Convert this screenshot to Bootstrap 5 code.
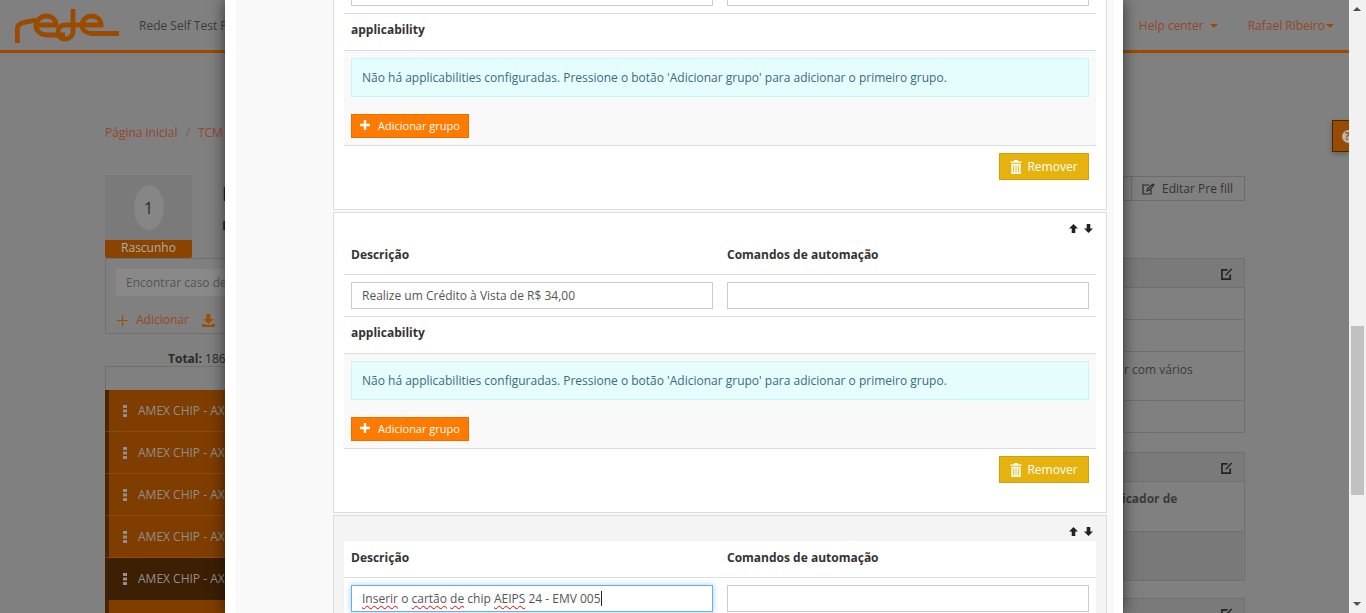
<!DOCTYPE html>
<html lang="en">
<head>
<meta charset="UTF-8">
<title>Rede Self Test Portal</title>
<link href="https://cdn.jsdelivr.net/npm/bootstrap@5.3.0/dist/css/bootstrap.min.css" rel="stylesheet">
<style>
html, body { height: 613px; overflow: hidden; }
body { font-family: "Open Sans", "Liberation Sans", sans-serif; font-size: 12px; color: #333; background: #808080; }
.shell { display: flex; height: 613px; position: relative; overflow: hidden; }

/* page behind the modal (already dimmed colours) */
.page { width: 1349px; flex: none; height: 613px; overflow: hidden; position: relative; color: #2a2a2a; }
.top-bar { height: 53px; border-bottom: 3px solid #9a4b00; display: flex; align-items: center; padding: 1px 15px 0; }
.top-name { margin-left: 18px; color: #3c3c3c; }
.top-link { color: #94472a; }
.help-link { margin-right: 30px; gap: 6px; }
.user-link { gap: 1px; margin-right: 0; }
.caret-dn { display: inline-block; width: 0; height: 0; border-left: 4px solid transparent; border-right: 4px solid transparent; border-top: 4px solid #9a4b00; vertical-align: middle; }
.crumbs { color: #94472a; margin: 71px 0 0 105px; line-height: 17px; height: 51px; }
.crumbs .sep { color: #666; margin: 0 8px; }
.page-cols { display: flex; justify-content: space-between; padding: 0 104px 0 105px; }
.left-col { width: 500px; }
.right-col { width: 122px; }
.status-line { display: flex; gap: 30px; }
.case-title { font-size: 20px; line-height: 24px; color: #1c1c1c; padding-top: 7px; font-weight: 600; }
.case-sub { font-weight: 700; color: #1f2a30; line-height: 14px; margin-top: 12px; font-size: 13px; }
.status-box { width: 87px; height: 83px; background: #7a7a7a; display: flex; flex-direction: column; align-items: center; }
.status-oval { width: 30px; height: 45px; border-radius: 50%; background: #868686; margin-top: 10px; display: flex; align-items: center; justify-content: center; font-size: 16px; }
.status-lbl { width: 100%; margin-top: auto; height: 18px; background: #8a4400; color: #adadad; text-align: center; line-height: 16px; border-radius: 0 0 2px 2px; }
.search-panel { border: 1px solid #707070; height: 76px; padding: 10px; }
.search-box { background: #898989; height: 27px; line-height: 27px; padding-left: 10px; color: #555; }
.search-acts { display: flex; align-items: center; gap: 13px; margin-top: 15px; color: #96481f; padding-left: 1px; }
.total-line { margin: 16px 0 0 63px; line-height: 17px; height: 16px; }
.case-head { height: 24px; border: 1px solid #707070; border-bottom: 0; }
.case-row { height: 42px; background: #7f3d00; border-left: 4px solid #4a2500; border-bottom: 1px solid #8c4a10; display: flex; align-items: center; padding-left: 14px; color: #8f8f8f; gap: 11px; }
.case-row.on { background: #3d1f03; border-left-color: #3d1f03; border-bottom-color: #3d1f03; }
.edit-fill { height: 25px; border: 1px solid #6c6c6c; margin-top: 1px; width: 114px; margin-left: 8px; display: flex; align-items: center; gap: 7px; padding-left: 10px; color: #333; position: relative; }
.edit-fill::before { content: ""; position: absolute; left: -9px; top: -1px; width: 9px; height: 25px; border: 1px solid #6c6c6c; border-right: 0; }
.fill-gap { height: 57px; }
.side-panel { border: 1px solid #6f6f6f; margin-bottom: 19px; }
.side-panel + .side-panel { margin-bottom: 17px; }
.side-head { height: 29px; border-bottom: 1px solid #6f6f6f; background: #7a7a7a; display: flex; align-items: center; justify-content: flex-end; padding: 1px 11px 0 0; }
.side-row { border-bottom: 1px solid #6f6f6f; margin-right: 1px; padding: 8px 0 0; color: #3a3a3a; }
.side-row:last-child { border-bottom: 0; }
.side-row.h32 { height: 32px; }
.side-row.h31 { height: 31px; }
.side-row.tall { height: 49px; padding-top: 9px; }
.side-row.strong { height: 50px; font-weight: 700; margin-left: -2px; }
.side-row.shade { height: 48px; background: #797979; }
.help-tab { position: absolute; right: 0; top: 120px; width: 17px; height: 32px; background: #974b00; border: 1px solid #4a2500; border-right: 0; overflow: hidden; box-shadow: 0 2px 5px rgba(0,0,0,.25); }
.help-dot { position: absolute; left: 9px; top: 9px; width: 13px; height: 13px; border-radius: 50%; background: #b5b5b5; color: #974b00; font-weight: 700; font-size: 10px; line-height: 13px; padding-left: 3px; }

/* modal */
.step-modal { position: absolute; left: 225px; top: 0; width: 898px; height: 613px; background: #fff; box-shadow: 0 0 15px rgba(0,0,0,.6); z-index: 5; overflow: hidden; padding: 0 9px 0 11px; }
.step-scroll { background: #f9f9f9; height: 613px; padding: 0 7px 0 97px; overflow: hidden; }
.step-list { margin-top: -91px; }
.step-card { height: 301px; background: #fff; border: 1px solid #ddd; margin-bottom: 2px; padding: 0 10px; position: relative; }
.step-card.editing { background: #f4f4f4; }
.move-btns { height: 25px; display: flex; justify-content: flex-end; align-items: center; gap: 6px; padding: 6px 3px 0 0; }
.step-head { display: grid; grid-template-columns: 1fr 1fr; gap: 14px; height: 37px; padding: 0 7px 3px; background: #fff; border-bottom: 1px solid #ddd; align-items: center; font-weight: 700; color: #333; }
.step-inputs { display: grid; grid-template-columns: 1fr 1fr; gap: 14px; height: 42px; padding: 7px 7px 0; background: #fff; border-bottom: 1px solid #ddd; }
.step-field { height: 27px; border: 1px solid #ccc; border-radius: 0; padding: 0 10px; font-size: 12px; color: #555; line-height: 25px; background: #fff; white-space: nowrap; }
.step-field.focused { border-color: #66afe9; box-shadow: 0 0 6px rgba(102,175,233,.6); }
.spell { text-decoration: underline wavy #e00; text-decoration-thickness: 1px; text-underline-offset: 2px; }
.text-cursor { display: inline-block; width: 1px; height: 15px; background: #222; vertical-align: -3px; }
.appl-title { height: 37px; padding: 0 7px; line-height: 32px; font-weight: 700; background: #fff; border-bottom: 1px solid #ddd; color: #333; }
.appl-body { background: #f9f9f9; height: 95px; padding: 7px 7px 0; border-bottom: 1px solid #ddd; }
.appl-note { height: 39px; background: #e5fdfd; border: 1px solid #c5f7f7; color: #3d6a80; padding: 0 10px; line-height: 37px; }
.add-group { background: #ff7b00; border: 1px solid #e87000; border-radius: 0; color: #fff; height: 24px; width: 118px; margin-top: 17px; padding: 0 0 2px 8px; font-size: 11px; display: flex; align-items: center; gap: 8px; line-height: 1; }
.step-foot { display: flex; justify-content: flex-end; padding: 7px 7px 0; }
.remove-step { background: #e6b30e; border: 1px solid #cfa00b; border-radius: 0; color: #fff; width: 90px; height: 27px; padding: 0; font-size: 12px; display: flex; align-items: center; justify-content: center; gap: 5px; line-height: 1; }

/* window scrollbar */
.win-scroll { width: 17px; flex: none; background: #f1f1f1; position: relative; }
.win-thumb { position: absolute; left: 2px; top: 326px; width: 13px; height: 169px; background: #c1c1c1; }
.win-up, .win-down { position: absolute; left: 4px; width: 0; height: 0; border-left: 4px solid transparent; border-right: 4px solid transparent; }
.win-up { top: 7px; border-bottom: 4px solid #505050; }
.win-down { bottom: 7px; border-top: 4px solid #505050; }
</style>
</head>
<body>
<div class="shell">
  <div class="page">
    <div class="top-bar">
      <svg width="106" height="36" viewBox="0 0 106 36" fill="none" stroke="#9a4b00" stroke-width="4.8">
        <path d="M2.400 35V21c0-4 2.600-5.500 6-6.300L21 12"/>
        <path d="M22 17h19c0-6-4.500-9-9.500-9S21 12 21 17.500 25.500 27 31.500 27H50"/>
        <path d="M58 1v22c0 5-3.500 8-8 8s-7-3-7-7 3-7 7-7h36c0-6-4.500-9-9.500-9S67 12 67 17.500 70.500 24.500 76 25.500h28" />
      </svg>
      <span class="top-name">Rede Self Test Portal</span>
      <span class="top-link ms-auto d-flex align-items-center help-link">Help center <span class="caret-dn"></span></span>
      <span class="top-link d-flex align-items-center user-link">Rafael Ribeiro<span class="caret-dn"></span></span>
    </div>
    <div class="crumbs">Página inicial<span class="sep">/</span>TCM</div>
    <div class="page-cols">
      <div class="left-col">
        <div class="status-line">
          <div class="status-box"><div class="status-oval">1</div><div class="status-lbl">Rascunho</div></div>
          <div><div class="case-title">I</div><div class="case-sub">F</div></div>
        </div>
        <div class="search-panel">
          <div class="search-box">Encontrar caso de teste</div>
          <div class="search-acts">
            <span class="d-flex align-items-center gap-2">
              <svg width="11" height="11" viewBox="0 0 11 11"><path d="M5.500 0v11M0 5.500h11" stroke="#a04f00" stroke-width="1.200"/></svg>
              Adicionar</span>
            <svg width="13" height="13" viewBox="0 0 13 13" fill="#a04f00"><path d="M4.500 0h4v5h3L6.500 10 1.500 5h3zM0 10h3l1 1h5l1-1h3v3H0z"/></svg>
          </div>
        </div>
        <div class="total-line"><b>Total:</b> 186</div>
        <div class="case-head"></div>
        <div class="case-row"><svg width="4" height="12" fill="#909090"><path d="M0 0h4v3H0zM0 4.500h4v3H0zM0 9h4v3H0z"/></svg>AMEX CHIP - AXP</div>
        <div class="case-row"><svg width="4" height="12" fill="#909090"><path d="M0 0h4v3H0zM0 4.500h4v3H0zM0 9h4v3H0z"/></svg>AMEX CHIP - AXP</div>
        <div class="case-row"><svg width="4" height="12" fill="#909090"><path d="M0 0h4v3H0zM0 4.500h4v3H0zM0 9h4v3H0z"/></svg>AMEX CHIP - AXP</div>
        <div class="case-row"><svg width="4" height="12" fill="#909090"><path d="M0 0h4v3H0zM0 4.500h4v3H0zM0 9h4v3H0z"/></svg>AMEX CHIP - AXP</div>
        <div class="case-row on"><svg width="4" height="12" fill="#909090"><path d="M0 0h4v3H0zM0 4.500h4v3H0zM0 9h4v3H0z"/></svg>AMEX CHIP - AXP</div>
        <div class="case-row"></div>
      </div>
      <div class="right-col">
        <div class="edit-fill">
          <svg width="13" height="12" viewBox="0 0 13 12" fill="none" stroke="#2a2a2a" stroke-width="1.200"><path d="M9 6.500V11H1V2h6M5 8l1-3 5-4 1 1-4.500 5z"/></svg>
          Editar Pre fill
        </div>
        <div class="fill-gap"></div>
        <div class="side-panel">
          <div class="side-head"><svg width="12" height="12" viewBox="0 0 13 13" fill="none" stroke="#222" stroke-width="1.800"><path d="M10 7v5H1V2h6"/><path d="M5 8l6.500-7" stroke-width="1.500"/></svg></div>
          <div class="side-row h32"></div>
          <div class="side-row h32"></div>
          <div class="side-row tall">r com vários</div>
          <div class="side-row h31"></div>
        </div>
        <div class="side-panel">
          <div class="side-head"><svg width="12" height="12" viewBox="0 0 13 13" fill="none" stroke="#222" stroke-width="1.800"><path d="M10 7v5H1V2h6"/><path d="M5 8l6.500-7" stroke-width="1.500"/></svg></div>
          <div class="side-row strong">icador de</div>
          <div class="side-row shade"></div>
        </div>
        <div class="side-panel">
          <div class="side-head"><svg width="12" height="12" viewBox="0 0 13 13" fill="none" stroke="#222" stroke-width="1.800"><path d="M10 7v5H1V2h6"/><path d="M5 8l6.500-7" stroke-width="1.500"/></svg></div>
        </div>
      </div>
    </div>
    <div class="help-tab"><span class="help-dot">?</span></div>
  </div>
  <div class="win-scroll"><span class="win-up"></span><span class="win-thumb"></span><span class="win-down"></span></div>

  <div class="step-modal">
    <div class="step-scroll">
      <div class="step-list">
        <div class="step-card">
          <div class="move-btns"></div>
          <div class="step-head"></div>
          <div class="step-inputs"><div class="step-field"></div><div class="step-field"></div></div>
          <div class="appl-title">applicability</div>
          <div class="appl-body">
            <div class="appl-note">Não há applicabilities configuradas. Pressione o botão 'Adicionar grupo' para adicionar o primeiro grupo.</div>
            <button class="btn add-group"><svg width="10" height="10" viewBox="0 0 10 10"><path d="M3.800 0h2.400v3.800H10v2.400H6.200V10H3.800V6.200H0V3.800h3.800z" fill="#fff"/></svg>Adicionar grupo</button>
          </div>
          <div class="step-foot"><button class="btn remove-step"><svg width="12" height="14" viewBox="0 0 12 15" fill="#fff"><path d="M4 0h4l.5 1.500H12V3H0V1.500h3.500zM1 4h10v11H1zm2 1.500V13.500h1V5.500zm2.500 0V13.500h1V5.500zm2.500 0V13.500h1V5.500z" fill-rule="evenodd"/></svg>Remover</button></div>
        </div>
        <div class="step-card">
          <div class="move-btns">
            <svg width="9" height="9" viewBox="0 0 9 9" fill="#222"><path d="M4.500 0L9 4.500H6.300V9H2.700V4.500H0z"/></svg>
            <svg width="9" height="9" viewBox="0 0 9 9" fill="#222"><path d="M4.500 9L0 4.500h2.700V0h3.600v4.500H9z"/></svg>
          </div>
          <div class="step-head"><span>Descrição</span><span>Comandos de automação</span></div>
          <div class="step-inputs"><div class="step-field">Realize um Crédito à Vista de R$ 34,00</div><div class="step-field"></div></div>
          <div class="appl-title">applicability</div>
          <div class="appl-body">
            <div class="appl-note">Não há applicabilities configuradas. Pressione o botão 'Adicionar grupo' para adicionar o primeiro grupo.</div>
            <button class="btn add-group"><svg width="10" height="10" viewBox="0 0 10 10"><path d="M3.800 0h2.400v3.800H10v2.400H6.200V10H3.800V6.200H0V3.800h3.800z" fill="#fff"/></svg>Adicionar grupo</button>
          </div>
          <div class="step-foot"><button class="btn remove-step"><svg width="12" height="14" viewBox="0 0 12 15" fill="#fff"><path d="M4 0h4l.5 1.500H12V3H0V1.500h3.500zM1 4h10v11H1zm2 1.500V13.500h1V5.500zm2.500 0V13.500h1V5.500zm2.500 0V13.500h1V5.500z" fill-rule="evenodd"/></svg>Remover</button></div>
        </div>
        <div class="step-card editing">
          <div class="move-btns">
            <svg width="9" height="9" viewBox="0 0 9 9" fill="#222"><path d="M4.500 0L9 4.500H6.300V9H2.700V4.500H0z"/></svg>
            <svg width="9" height="9" viewBox="0 0 9 9" fill="#222"><path d="M4.500 9L0 4.500h2.700V0h3.600v4.500H9z"/></svg>
          </div>
          <div class="step-head"><span>Descrição</span><span>Comandos de automação</span></div>
          <div class="step-inputs"><div class="step-field focused"><span class="spell">Inserir</span> o <span class="spell">cartão</span> <span class="spell">de</span> chip <span class="spell">AEIPS</span> 24 - EMV 005<span class="text-cursor"></span></div><div class="step-field"></div></div>
        </div>
      </div>
    </div>
  </div>
</div>
<script src="https://cdn.jsdelivr.net/npm/bootstrap@5.3.0/dist/js/bootstrap.bundle.min.js"></script>
</body>
</html>
